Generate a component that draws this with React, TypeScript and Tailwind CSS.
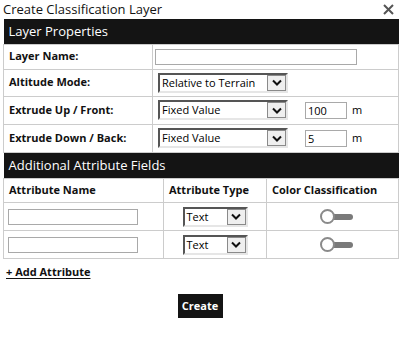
import React from "react";

// ─── Small form controls drawn in the old Windows look ─────────────────────

const Chevron = () => (
  <svg width="10" height="7" viewBox="0 0 10 7" fill="none">
    <path d="M1 1.5 L5 5.5 L9 1.5" stroke="#111" strokeWidth="2" />
  </svg>
);

const FakeSelect = ({ value, width }: { value: string; width: string }) => (
  <div
    className={`${width} flex h-[20px] items-stretch border-t-2 border-l-2 border-r-2 border-b-2 border-t-[#555] border-l-[#555] border-r-[#e6e6e6] border-b-[#e6e6e6] bg-white`}
  >
    <span className="flex-1 pl-[2px] text-[11px] leading-[16px] text-black">{value}</span>
    <span className="flex w-[19px] items-center justify-center border border-[#8a8a8a] bg-[#efefef]">
      <Chevron />
    </span>
  </div>
);

const Toggle = () => (
  <div className="relative mx-auto h-[15px] w-[33px]">
    <div className="absolute left-[12px] top-[5px] h-[6px] w-[21px] rounded-r-full bg-[#7a7a7a]" />
    <div className="absolute left-0 top-0 h-[15px] w-[15px] rounded-full border-2 border-[#8a8a8a] bg-white" />
  </div>
);

const cell = "border border-[#cccccc] px-[5px]";
const label = "text-[11px] font-bold text-[#111]";

export default function App() {
  return (
    <div className="h-[350px] w-[400px] bg-white font-['Open_Sans',sans-serif] text-black">
      {/* title bar */}
      <div className="flex h-[19px] items-center justify-between pl-[3px] pr-[6px]">
        <span className="text-[13px] leading-none text-[#111]">Create Classification Layer</span>
        <svg width="11" height="11" viewBox="0 0 11 11">
          <path d="M1 1 L10 10 M10 1 L1 10" stroke="#555" strokeWidth="2" />
        </svg>
      </div>

      {/* layer properties */}
      <table className="ml-[3px] w-[396px] border-collapse">
        <tbody>
          <tr className="h-[25px] bg-[#141414]">
            <td colSpan={2} className="px-[5px] text-[13px] text-white">
              Layer Properties
            </td>
          </tr>
          <tr className="h-[25px]">
            <td className={`${cell} w-[149px] ${label}`}>Layer Name:</td>
            <td className="border border-[#cccccc] pl-[2px]">
              <div className="h-[16px] w-[202px] border border-[#a9a9a9] bg-white" />
            </td>
          </tr>
          <tr className="h-[27px]">
            <td className={`${cell} ${label}`}>Altitude Mode:</td>
            <td className={cell}>
              <FakeSelect value="Relative to Terrain" width="w-[130px]" />
            </td>
          </tr>
          <tr className="h-[28px]">
            <td className={`${cell} ${label}`}>Extrude Up / Front:</td>
            <td className={cell}>
              <div className="flex items-center">
                <FakeSelect value="Fixed Value" width="w-[130px]" />
                <div className="ml-[17px] h-[17px] w-[42px] border border-[#a9a9a9] pl-[2px] text-[11px] leading-[15px]">
                  100
                </div>
                <span className="ml-[5px] text-[11px]">m</span>
              </div>
            </td>
          </tr>
          <tr className="h-[28px]">
            <td className={`${cell} ${label}`}>Extrude Down / Back:</td>
            <td className={cell}>
              <div className="flex items-center">
                <FakeSelect value="Fixed Value" width="w-[130px]" />
                <div className="ml-[17px] h-[17px] w-[42px] border border-[#a9a9a9] pl-[2px] text-[11px] leading-[15px]">
                  5
                </div>
                <span className="ml-[5px] text-[11px]">m</span>
              </div>
            </td>
          </tr>
        </tbody>
      </table>

      {/* additional attribute fields */}
      <table className="ml-[3px] w-[396px] border-collapse">
        <tbody>
          <tr className="h-[26px] bg-[#141414]">
            <td colSpan={3} className="px-[5px] text-[13px] text-white">
              Additional Attribute Fields
            </td>
          </tr>
          <tr className="h-[24px]">
            <td className={`${cell} w-[160px] ${label}`}>Attribute Name</td>
            <td className={`${cell} w-[103px] ${label}`}>Attribute Type</td>
            <td className={`${cell} ${label}`}>Color Classification</td>
          </tr>
          {[0, 1].map((i) => (
            <tr key={i} className="h-[28px]">
              <td className="border border-[#cccccc] pl-[4px]">
                <div className="h-[16px] w-[130px] border border-[#a9a9a9] bg-white" />
              </td>
              <td className="border border-[#cccccc]">
                <div className="flex justify-center">
                  <FakeSelect value="Text" width="w-[65px]" />
                </div>
              </td>
              <td className="border border-[#cccccc] pl-[8px]">
                <Toggle />
              </td>
            </tr>
          ))}
        </tbody>
      </table>

      <div className="mt-[5px] pl-[6px] text-[11px] leading-[16px]">
        <span className="font-bold text-[#111] underline underline-offset-2">+ Add Attribute</span>
      </div>

      <div className="mt-[14px] flex justify-center">
        <button className="h-[24px] w-[45px] bg-[#141414] text-[11px] font-bold text-white">
          Create
        </button>
      </div>
    </div>
  );
}
